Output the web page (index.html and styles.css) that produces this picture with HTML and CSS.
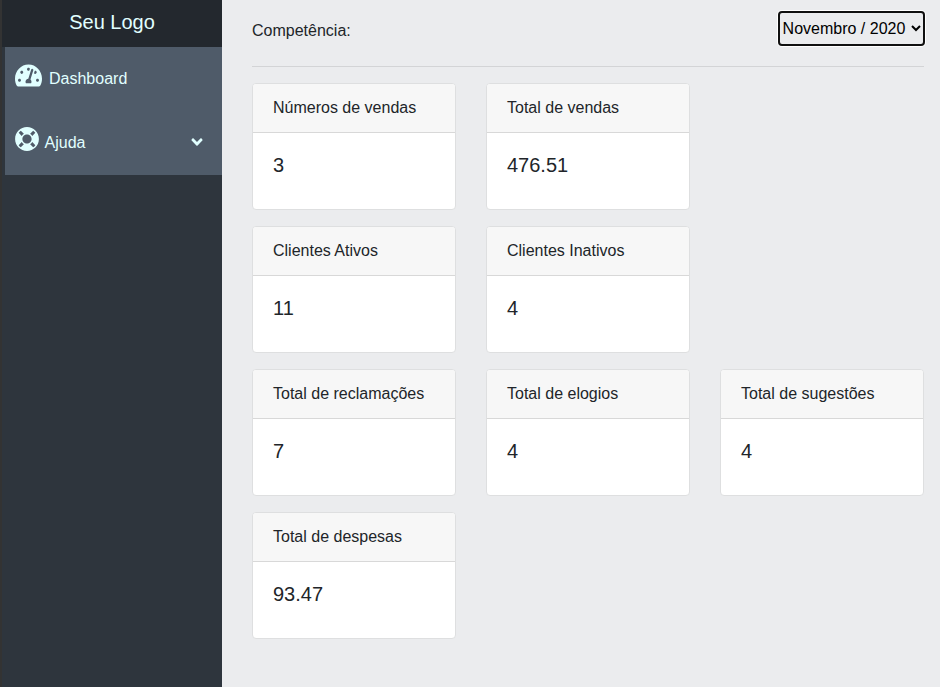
FILE: index.html
```html
<!DOCTYPE html>
<html lang="pt-BR">
<head>
<meta charset="utf-8">
<title>Dashboard</title>
<link rel="stylesheet" href="styles.css">
</head>
<body>
<div class="app">
  <aside class="sidebar">
    <div class="brand">Seu Logo</div>
    <nav class="menu">
      <a class="menu-item">
        <svg class="icon icon-dash" viewBox="0 22 576 468" preserveAspectRatio="none"><path fill="currentColor" d="M288 32C128.940 32 0 160.940 0 320c0 52.800 14.250 102.260 39.060 144.800 5.610 9.620 16.300 15.200 27.440 15.200h443c11.140 0 21.830-5.580 27.440-15.200C561.750 422.260 576 372.800 576 320c0-159.060-128.940-288-288-288zm0 64c14.710 0 26.580 10.130 30.320 23.650-1.110 2.260-2.640 4.230-3.450 6.670l-9.220 27.670c-5.130 3.490-10.970 6.010-17.640 6.010-17.670 0-32-14.330-32-32S270.330 96 288 96zM96 384c-17.670 0-32-14.330-32-32s14.330-32 32-32 32 14.330 32 32-14.330 32-32 32zm48-160c-17.670 0-32-14.330-32-32s14.330-32 32-32 32 14.330 32 32-14.330 32-32 32zm246.770-72.410l-61.330 184C343.130 347.330 352 364.540 352 384c0 11.720-3.380 22.550-8.880 32H232.880c-5.500-9.450-8.880-20.280-8.880-32 0-33.940 26.500-61.430 59.900-63.590l61.340-184.010c4.170-12.560 17.730-19.450 30.360-15.170 12.570 4.190 19.350 17.790 15.170 30.360zm14.660 57.200l15.520-46.550c3.470-1.290 7.130-2.230 11.050-2.230 17.670 0 32 14.330 32 32s-14.330 32-32 32c-11.380-.010-20.890-6.290-26.570-15.220zM480 384c-17.670 0-32-14.330-32-32s14.330-32 32-32 32 14.330 32 32-14.330 32-32 32z"/></svg>
        <span>Dashboard</span>
      </a>
      <a class="menu-item">
        <svg class="icon icon-help" viewBox="6 6 500 500"><path fill="currentColor" d="M256 8C119.033 8 8 119.033 8 256s111.033 248 248 248 248-111.033 248-248S392.967 8 256 8zm173.696 119.559l-63.399 63.399c-10.987-18.559-26.670-34.252-45.255-45.255l63.399-63.399a218.396 218.396 0 0 1 45.255 45.255zM256 352c-53.019 0-96-42.981-96-96s42.981-96 96-96 96 42.981 96 96-42.981 96-96 96zM127.559 82.304l63.399 63.399c-18.559 10.987-34.252 26.670-45.255 45.255l-63.399-63.399a218.372 218.372 0 0 1 45.255-45.255zM82.304 384.441l63.399-63.399c10.987 18.559 26.670 34.252 45.255 45.255l-63.399 63.399a218.396 218.396 0 0 1-45.255-45.255zm302.137 45.255l-63.399-63.399c18.559-10.987 34.252-26.670 45.255-45.255l63.399 63.399a218.403 218.403 0 0 1-45.255 45.255z"/></svg>
        <span>Ajuda</span>
        <svg class="arrow" viewBox="0 0 320 512"><path fill="currentColor" d="M143 352.300L7 216.300c-9.400-9.400-9.400-24.600 0-33.900l22.600-22.600c9.400-9.400 24.600-9.400 33.900 0l96.400 96.400 96.400-96.400c9.400-9.400 24.600-9.400 33.900 0l22.600 22.600c9.400 9.400 9.400 24.600 0 33.900l-136 136c-9.200 9.400-24.400 9.400-33.800 0z"/></svg>
      </a>
    </nav>
  </aside>
  <main class="content">
    <header class="toolbar">
      <label for="period">Competência:</label>
      <select id="period" class="period"><option>Novembro / 2020</option></select>
    </header>
    <div class="cards">
      <section class="card"><h2>Números de vendas</h2><p>3</p></section>
      <section class="card"><h2>Total de vendas</h2><p>476.51</p></section>
      <section class="card row-start"><h2>Clientes Ativos</h2><p>11</p></section>
      <section class="card"><h2>Clientes Inativos</h2><p>4</p></section>
      <section class="card row-start"><h2>Total de reclamações</h2><p>7</p></section>
      <section class="card"><h2>Total de elogios</h2><p>4</p></section>
      <section class="card"><h2>Total de sugestões</h2><p>4</p></section>
      <section class="card row-start"><h2>Total de despesas</h2><p>93.47</p></section>
    </div>
  </main>
</div>
</body>
</html>
```
FILE: styles.css
```css
* { box-sizing: border-box; }

body {
  margin: 0;
  background: #ebecee;
  color: #212529;
  font: 16px/24px "Liberation Sans", Arial, sans-serif;
}

.app {
  display: flex;
  height: 687px;
  overflow: hidden;
}

.sidebar {
  width: 222px;
  flex: none;
  border-left: 2px solid #333;
  background: #2e353d;
  color: #e1ffff;
}

.brand {
  height: 47px;
  padding-top: 7px;
  background: #23282e;
  font-size: 20px;
  line-height: 30px;
  text-align: center;
}

.menu-item {
  display: flex;
  height: 64px;
  margin-left: 3px;
  padding: 16px 19px 0 10px;
  background: #4f5b69;
}

.menu-item span {
  padding-top: 4px;
}

.icon {
  height: 24px;
  flex: none;
}

.icon-dash {
  width: 27px;
  height: 23px;
  margin: 1px 7px 0 0;
}

.icon-help {
  width: 24px;
  margin-right: 5.5px;
}

.arrow {
  width: 12px;
  height: 18px;
  margin: 6px 0 0 auto;
}

.content {
  flex: 1;
  padding: 0 16px 0 30px;
}

.toolbar {
  display: flex;
  justify-content: space-between;
  height: 67px;
  padding-top: 12px;
  border-bottom: 1px solid #d3d4d6;
}

.toolbar label {
  padding-top: 7px;
}

.period {
  width: 145px;
  height: 33px;
  padding: 0;
  border: 0;
  border-radius: 3px;
  outline: 2px solid #101010;
  outline-offset: -1px;
  box-shadow: 0 0 0 2px #fff;
  background: #ebecee;
  color: #000;
  font: 16px "Liberation Sans", Arial, sans-serif;
  text-indent: -0.4px;
}

.cards {
  display: grid;
  grid-template-columns: repeat(3, 204px);
  gap: 16px 30px;
  padding-top: 16px;
}

.card {
  height: 127px;
  border: 1px solid #dedfe0;
  border-radius: 4px;
  background: #fff;
  overflow: hidden;
}

.row-start {
  grid-column-start: 1;
}

.card h2 {
  height: 49px;
  margin: 0;
  padding: 12px 20px;
  border-bottom: 1px solid #d8d8d8;
  background: #f7f7f7;
  font-size: 16px;
  font-weight: 400;
}

.card p {
  margin: 20px;
  font-size: 20px;
}
```
